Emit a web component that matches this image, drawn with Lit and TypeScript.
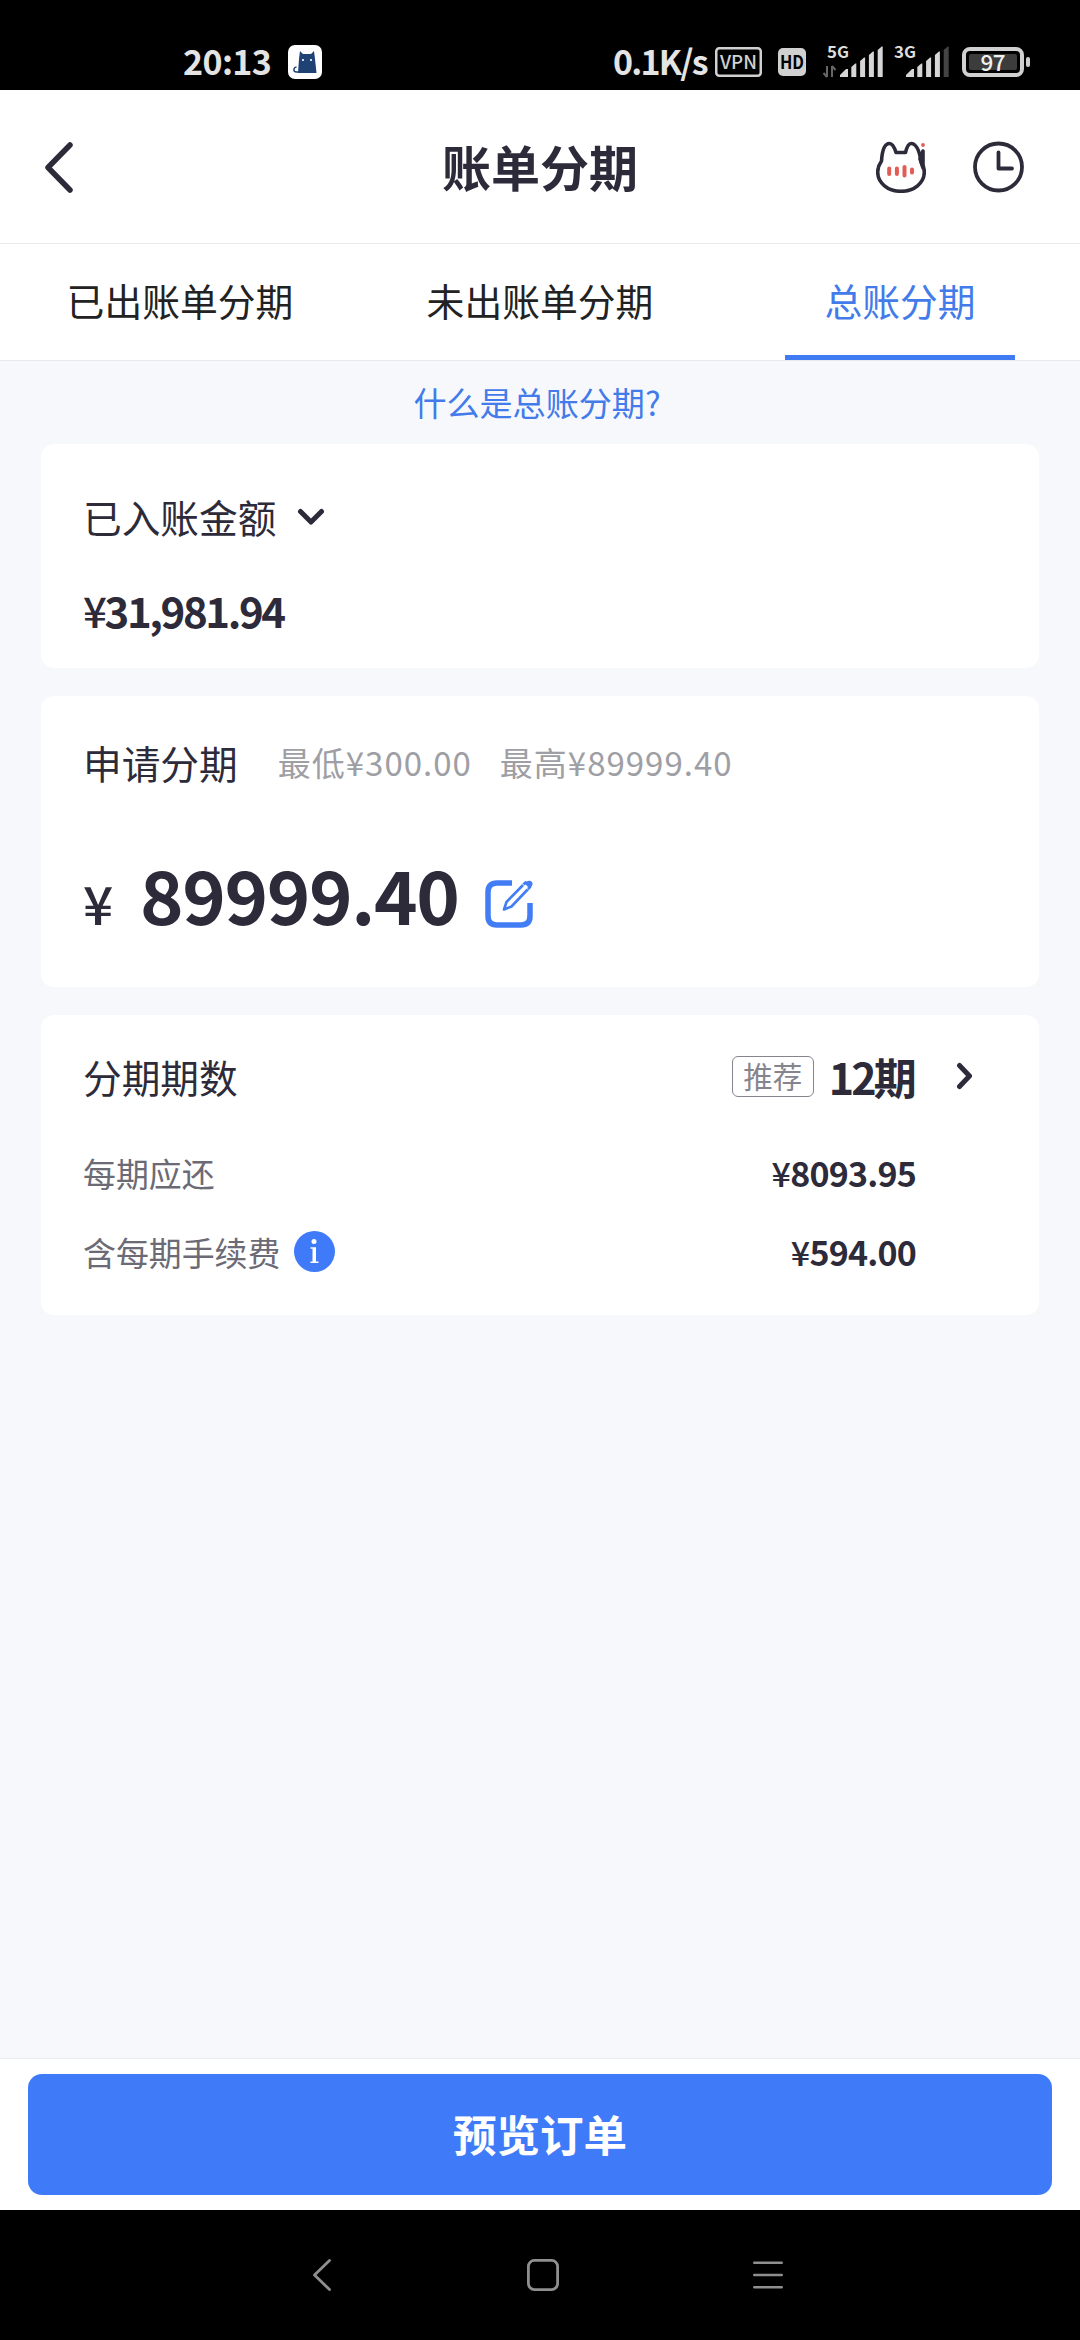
import { LitElement, html, css, svg } from "lit";
import { customElement, property, state } from "lit/decorators.js";
import { classMap } from "lit/directives/class-map.js";

@customElement("status-bar")
class StatusBar extends LitElement {
  static styles = css`
    :host {
      display: block;
      height: 90px;
      background: #000;
      color: #e4e4e4;
    }
    .bar {
      display: flex;
      align-items: center;
      box-sizing: border-box;
      height: 90px;
      padding: 34px 50px 0 183px;
      font-size: 34px;
      font-weight: 700;
      line-height: 56px;
      white-space: nowrap;
    }
    .time {
      width: 105px;
      margin-top: -3px;
      letter-spacing: -0.6px;
    }
    .speed {
      width: 102px;
      margin: -3px 0 0 auto;
      letter-spacing: -1.8px;
    }
    .icon {
      display: block;
      flex: none;
      overflow: visible;
    }
    .vpn {
      margin-right: 16px;
    }
    .hd {
      margin-right: 16px;
    }
    .cell {
      margin-right: 10px;
    }
    .cell2 {
      margin-right: 15px;
    }
    text {
      font-family: "Noto Sans CJK SC", sans-serif;
    }
  `;

  private bars(x: number, dimLast: boolean) {
    return [0, 1, 2, 3, 4].map((i) => {
      const left = x + i * 8.8;
      const top = [23, 18, 12, 6, 1][i];
      const fill = dimLast && i === 4 ? "#444" : "#d6d6d6";
      return i === 0
        ? svg`<path d="M${left - 1} 31 v-2 l6 -6 h2 v8z" fill=${fill} />`
        : svg`<path d="M${left + 1.5} 31 v${top - 28} l4 -3.500 h1 v${31.5 - top}z" fill=${fill} />`;
    });
  }

  render() {
    return html`
      <div class="bar">
        <span class="time">20:13</span>
        <svg class="icon" width="34" height="34" viewBox="0 0 34 34">
          <rect width="34" height="34" rx="7" fill="#fff" />
          <path d="M12 6l3 3h8l3-3 1 8 1.500 14H10l1-14z" fill="#1f4275" />
          <path d="M11 27H8.500q-3 0-2.500-3 .5-2 2.500-2" fill="none" stroke="#1f4275" stroke-width="1.500" />
          <circle cx="15" cy="15" r="1.100" fill="#fff" />
          <circle cx="23" cy="15" r="1.100" fill="#fff" />
        </svg>
        <span class="speed">0.1K/s</span>
        <svg class="icon vpn" width="47" height="30" viewBox="0 0 47 30">
          <rect x="1.250" y="1.250" width="44.500" height="27.500" rx="3" fill="none" stroke="#d0d0d0" stroke-width="2.500" />
          <text x="23.500" y="22" text-anchor="middle" font-size="18.500" font-weight="500" fill="#d0d0d0" textLength="37" lengthAdjust="spacingAndGlyphs">VPN</text>
        </svg>
        <svg class="icon hd" width="28" height="28" viewBox="0 0 28 28">
          <rect width="28" height="28" rx="5" fill="#d0d0d0" />
          <text x="14" y="20.500" text-anchor="middle" font-size="18" font-weight="700" fill="#000" textLength="24" lengthAdjust="spacingAndGlyphs">HD</text>
        </svg>
        <svg class="icon cell" width="62" height="32" viewBox="0 0 62 32">
          <text x="5" y="12" font-size="16" font-weight="700" fill="#dedede" textLength="22" lengthAdjust="spacingAndGlyphs">5G</text>
          <path d="M5 20v11M5 31l-3.500-4M10 31V20M10 20l3.500 4" stroke="#666" stroke-width="2" fill="none" />
          ${this.bars(19, false)}
        </svg>
        <svg class="icon cell2" width="53" height="32" viewBox="0 0 53 32">
          <text x="0" y="12" font-size="16" font-weight="700" fill="#dedede" textLength="22" lengthAdjust="spacingAndGlyphs">3G</text>
          ${this.bars(13, true)}
        </svg>
        <svg class="icon" width="68" height="30" viewBox="0 0 68 30">
          <rect x="2" y="2" width="58" height="26" rx="6" fill="none" stroke="#d0d0d0" stroke-width="4" />
          <rect x="7" y="7" width="48" height="16" rx="2" fill="#3c3c3c" />
          <rect x="64" y="10" width="4" height="10" rx="2" fill="#d0d0d0" />
          <text x="31" y="23.500" text-anchor="middle" font-size="22.500" font-weight="500" fill="#f0f0f0" textLength="25">97</text>
        </svg>
      </div>
    `;
  }
}

@customElement("page-header")
class PageHeader extends LitElement {
  static styles = css`
    :host {
      display: block;
    }
    .header {
      display: grid;
      grid-template-columns: 1fr auto 1fr;
      align-items: center;
      box-sizing: border-box;
      height: 154px;
      padding: 0 56px 0 44px;
      background: #fff;
      border-bottom: 1px solid #ebebed;
      color: #2d2b3a;
    }
    .title {
      margin: -2px 0 0;
      padding: 0 0 0 12px;
      font-size: 49px;
      font-weight: 700;
      line-height: 60px;
    }
    .actions {
      display: flex;
      justify-content: flex-end;
      gap: 47px;
    }
    .icon {
      display: block;
    }
  `;

  @property() heading = "";

  render() {
    return html`
      <div class="header">
        <svg class="icon" width="30" height="52" viewBox="0 0 30 52" fill="none" stroke="#2d2b3a" stroke-width="5.500" stroke-linecap="round" stroke-linejoin="round">
          <path d="M26 4L4 26.500L26 49" />
        </svg>
        <h1 class="title">${this.heading}</h1>
        <div class="actions">
          <svg class="icon" width="50" height="52" viewBox="0 0 50 52" fill="none" stroke="#2d2b3a" stroke-width="3.600" stroke-linecap="round" stroke-linejoin="round">
            <path d="M20 11.500C18 5 16 2.500 13.500 2.500 8 2.500 6 12 5.500 20 3 23.500 1.700 27 1.700 31 1.700 42 12 50.300 25 50.300S48.300 42 48.300 31c0-3.500-1-6.500-3-9.500C44 13 41 2.500 35 2.500c-2.500 0-4 3-5.500 9z" />
            <path d="M47 10V27L44 18z" fill="#2d2b3a" />
            <circle cx="47" cy="4" r="1.900" fill="#e25c55" stroke="none" />
            <path d="M13.200 27.500v5.500M20.900 27.500v5.500M28.500 26v8.500M36 28.500v3" stroke="#e25c55" stroke-width="4" />
          </svg>
          <svg class="icon" width="51" height="52" viewBox="0 0 51 52" fill="none" stroke="#2d2b3a" stroke-width="3.800" stroke-linecap="round" stroke-linejoin="round">
            <circle cx="25.500" cy="26" r="23.500" />
            <path d="M25.500 11.500V27.500H39" />
          </svg>
        </div>
      </div>
    `;
  }
}

@customElement("plan-tabs")
class PlanTabs extends LitElement {
  static styles = css`
    :host {
      display: block;
    }
    .tabs {
      display: grid;
      grid-template-columns: repeat(3, 1fr);
      background: #fff;
      border-bottom: 1px solid #e8e9ee;
    }
    .tab {
      display: flex;
      flex-direction: column;
      align-items: center;
      height: 116px;
      color: #222;
      font-size: 37.8px;
      line-height: 111px;
    }
    .label {
      height: 111px;
    }
    .marker {
      width: 230px;
      height: 5px;
    }
    .active {
      color: #437bea;
    }
    .active .marker {
      background: #417bf3;
    }
  `;

  @state() private selected = 2;

  render() {
    return html`
      <div class="tabs" role="tablist">
        ${["已出账单分期", "未出账单分期", "总账分期"].map(
          (label, i) => html`
            <div class=${classMap({ tab: true, active: i === this.selected })} role="tab" @click=${() => (this.selected = i)}>
              <span class="label">${label}</span>
              <span class="marker"></span>
            </div>
          `
        )}
      </div>
    `;
  }
}

@customElement("app-root")
class AppRoot extends LitElement {
  static styles = css`
    :host {
      display: block;
      font-family: "Noto Sans CJK SC", sans-serif;
      color: #2d2b3a;
    }
    .screen {
      display: flex;
      flex-direction: column;
      width: 1080px;
      height: 2340px;
      background: #f6f8fc;
      white-space: nowrap;
      overflow: hidden;
    }
    .body {
      flex: 1;
      display: flex;
      flex-direction: column;
      padding: 0 41px;
    }
    .link {
      height: 83px;
      padding-right: 6px;
      line-height: 83px;
      text-align: center;
      font-size: 33.1px;
      color: #437bea;
    }
    .card {
      box-sizing: border-box;
      background: #fff;
      border-radius: 13px;
      padding: 0 42px;
    }
    .posted {
      height: 224px;
      padding-top: 44px;
      margin-bottom: 28px;
    }
    .request {
      height: 291px;
      padding-top: 38px;
      margin-bottom: 28px;
    }
    .terms {
      height: 300px;
      padding-top: 31px;
    }
    .row {
      display: flex;
      align-items: center;
    }
    .name {
      font-size: 38.7px;
      line-height: 56px;
    }
    .posted .row {
      gap: 21px;
    }
    .posted .icon {
      margin-top: 2px;
    }
    .posted-amount {
      margin-top: 38px;
      font-size: 42px;
      font-weight: 700;
      line-height: 56px;
      letter-spacing: -2.4px;
    }
    .sign {
      font-weight: 500;
    }
    .limits {
      display: flex;
      gap: 28px;
      margin-left: 40px;
      font-size: 33px;
      line-height: 56px;
      letter-spacing: 1px;
      color: #9e9ea5;
    }
    .amount {
      margin-top: 53px;
      height: 100px;
      align-items: baseline;
      line-height: 100px;
    }
    .yen {
      width: 57px;
      font-size: 53px;
      font-weight: 500;
    }
    .value {
      width: 344px;
      font-size: 74px;
      font-weight: 700;
      letter-spacing: -1.4px;
    }
    .icon {
      display: block;
      flex: none;
    }
    .edit {
      align-self: center;
      margin-top: 22px;
    }
    .term-value {
      margin-left: auto;
      gap: 15px;
      font-size: 43px;
      font-weight: 700;
      line-height: 60px;
    }
    .count {
      letter-spacing: -2.8px;
    }
    .tag {
      box-sizing: border-box;
      width: 82px;
      height: 41px;
      border: 1px solid #85858e;
      border-radius: 6px;
      text-align: center;
      font-size: 29.500px;
      font-weight: 400;
      line-height: 37px;
      color: #85858e;
    }
    .go {
      margin: 0 24px 0 42px;
    }
    .detail {
      height: 79px;
      color: #6c6a75;
      font-size: 32.900px;
    }
    .detail.first {
      margin-top: 27px;
    }
    .info {
      margin-left: 14px;
    }
    .money {
      margin-left: auto;
      padding-right: 81px;
      font-size: 34px;
      font-weight: 700;
      letter-spacing: -0.8px;
      color: #2d2b3a;
    }
    .footer {
      box-sizing: border-box;
      height: 152px;
      padding: 15px 28px;
      background: #fff;
      border-top: 1px solid #ebecf0;
    }
    .submit {
      display: block;
      width: 100%;
      height: 121px;
      padding: 0 0 2px;
      border: 0;
      border-radius: 14px;
      background: #3f7bf9;
      color: #fff;
      font: 700 43.500px / 119px "Noto Sans CJK SC", sans-serif;
    }
    .nav {
      display: flex;
      align-items: center;
      box-sizing: border-box;
      height: 130px;
      padding-left: 312px;
      background: #000;
    }
    .nav-home {
      margin: 0 194px 0 195px;
    }
  `;

  render() {
    return html`
      <div class="screen">
        <status-bar></status-bar>
        <page-header heading="账单分期"></page-header>
        <plan-tabs></plan-tabs>
        <main class="body">
          <div class="link">什么是总账分期?</div>

          <section class="card posted">
            <div class="row">
              <span class="name">已入账金额</span>
              <svg class="icon" width="28" height="18" viewBox="0 0 28 18" fill="none" stroke="#2d2b3a" stroke-width="5" stroke-linecap="round" stroke-linejoin="round">
                <path d="M3.500 3.500L14 14L24.500 3.500" />
              </svg>
            </div>
            <div class="posted-amount"><span class="sign">¥</span>31,981.94</div>
          </section>

          <section class="card request">
            <div class="row">
              <span class="name">申请分期</span>
              <span class="limits"><span>最低¥300.00</span><span>最高¥89999.40</span></span>
            </div>
            <div class="row amount">
              <span class="yen">¥</span>
              <span class="value">89999.40</span>
              <svg class="icon edit" width="50" height="50" viewBox="0 0 50 50" fill="none" stroke="#427df5">
                <path d="M28 4H13Q4 4 4 13V37Q4 46 13 46H37Q46 46 46 37V24" stroke-width="5.500" />
                <path d="M20 30.500L22.500 23L41.500 3.500L46 8L27.500 27.500Z" stroke-width="2.600" stroke-linejoin="round" />
                <path d="M42 3Q45.500 0.500 48 3Q49.500 5.500 47 8Z" fill="#427df5" stroke="none" />
                <path d="M38.500 5L44 10.500" stroke="#fff" stroke-width="1" />
              </svg>
            </div>
          </section>

          <section class="card terms">
            <div class="row">
              <span class="name">分期期数</span>
              <span class="row term-value"><span class="tag">推荐</span><span class="count">12期</span></span>
              <svg class="icon go" width="17" height="28" viewBox="0 0 17 28" fill="none" stroke="#2d2b3a" stroke-width="5" stroke-linecap="round" stroke-linejoin="round">
                <path d="M3.500 3.500L13.500 14L3.500 24.500" />
              </svg>
            </div>
            <div class="row detail first">
              <span>每期应还</span>
              <span class="money"><span class="sign">¥</span>8093.95</span>
            </div>
            <div class="row detail">
              <span>含每期手续费</span>
              <svg class="icon info" width="41" height="41" viewBox="0 0 41 41">
                <circle cx="20.500" cy="20.500" r="20.500" fill="#3f7bf9" />
                <circle cx="20" cy="10.500" r="2.500" fill="#fff" />
                <path d="M16.500 16.200H22V30.500H24.500V32H16.500V30.500H18.500V17.700H16.500Z" fill="#fff" />
              </svg>
              <span class="money"><span class="sign">¥</span>594.00</span>
            </div>
          </section>
        </main>

        <footer class="footer">
          <button class="submit">预览订单</button>
        </footer>

        <nav class="nav">
          <svg class="icon" width="20" height="34" viewBox="0 0 20 34" fill="none" stroke="#8f8f8f" stroke-width="2.800" stroke-linecap="round" stroke-linejoin="round">
            <path d="M17.500 2.500L2.500 17L17.500 31.500" />
          </svg>
          <svg class="icon nav-home" width="32" height="32" viewBox="0 0 32 32" fill="none" stroke="#8f8f8f" stroke-width="2.800">
            <rect x="1.400" y="1.400" width="29.200" height="29.200" rx="6" />
          </svg>
          <svg class="icon" width="30" height="28" viewBox="0 0 30 28" stroke="#8f8f8f" stroke-width="2.600" stroke-linecap="round">
            <path d="M1.300 1.700H28.700M1.300 14H28.700M1.300 26.300H28.700" />
          </svg>
        </nav>
      </div>
    `;
  }
}
